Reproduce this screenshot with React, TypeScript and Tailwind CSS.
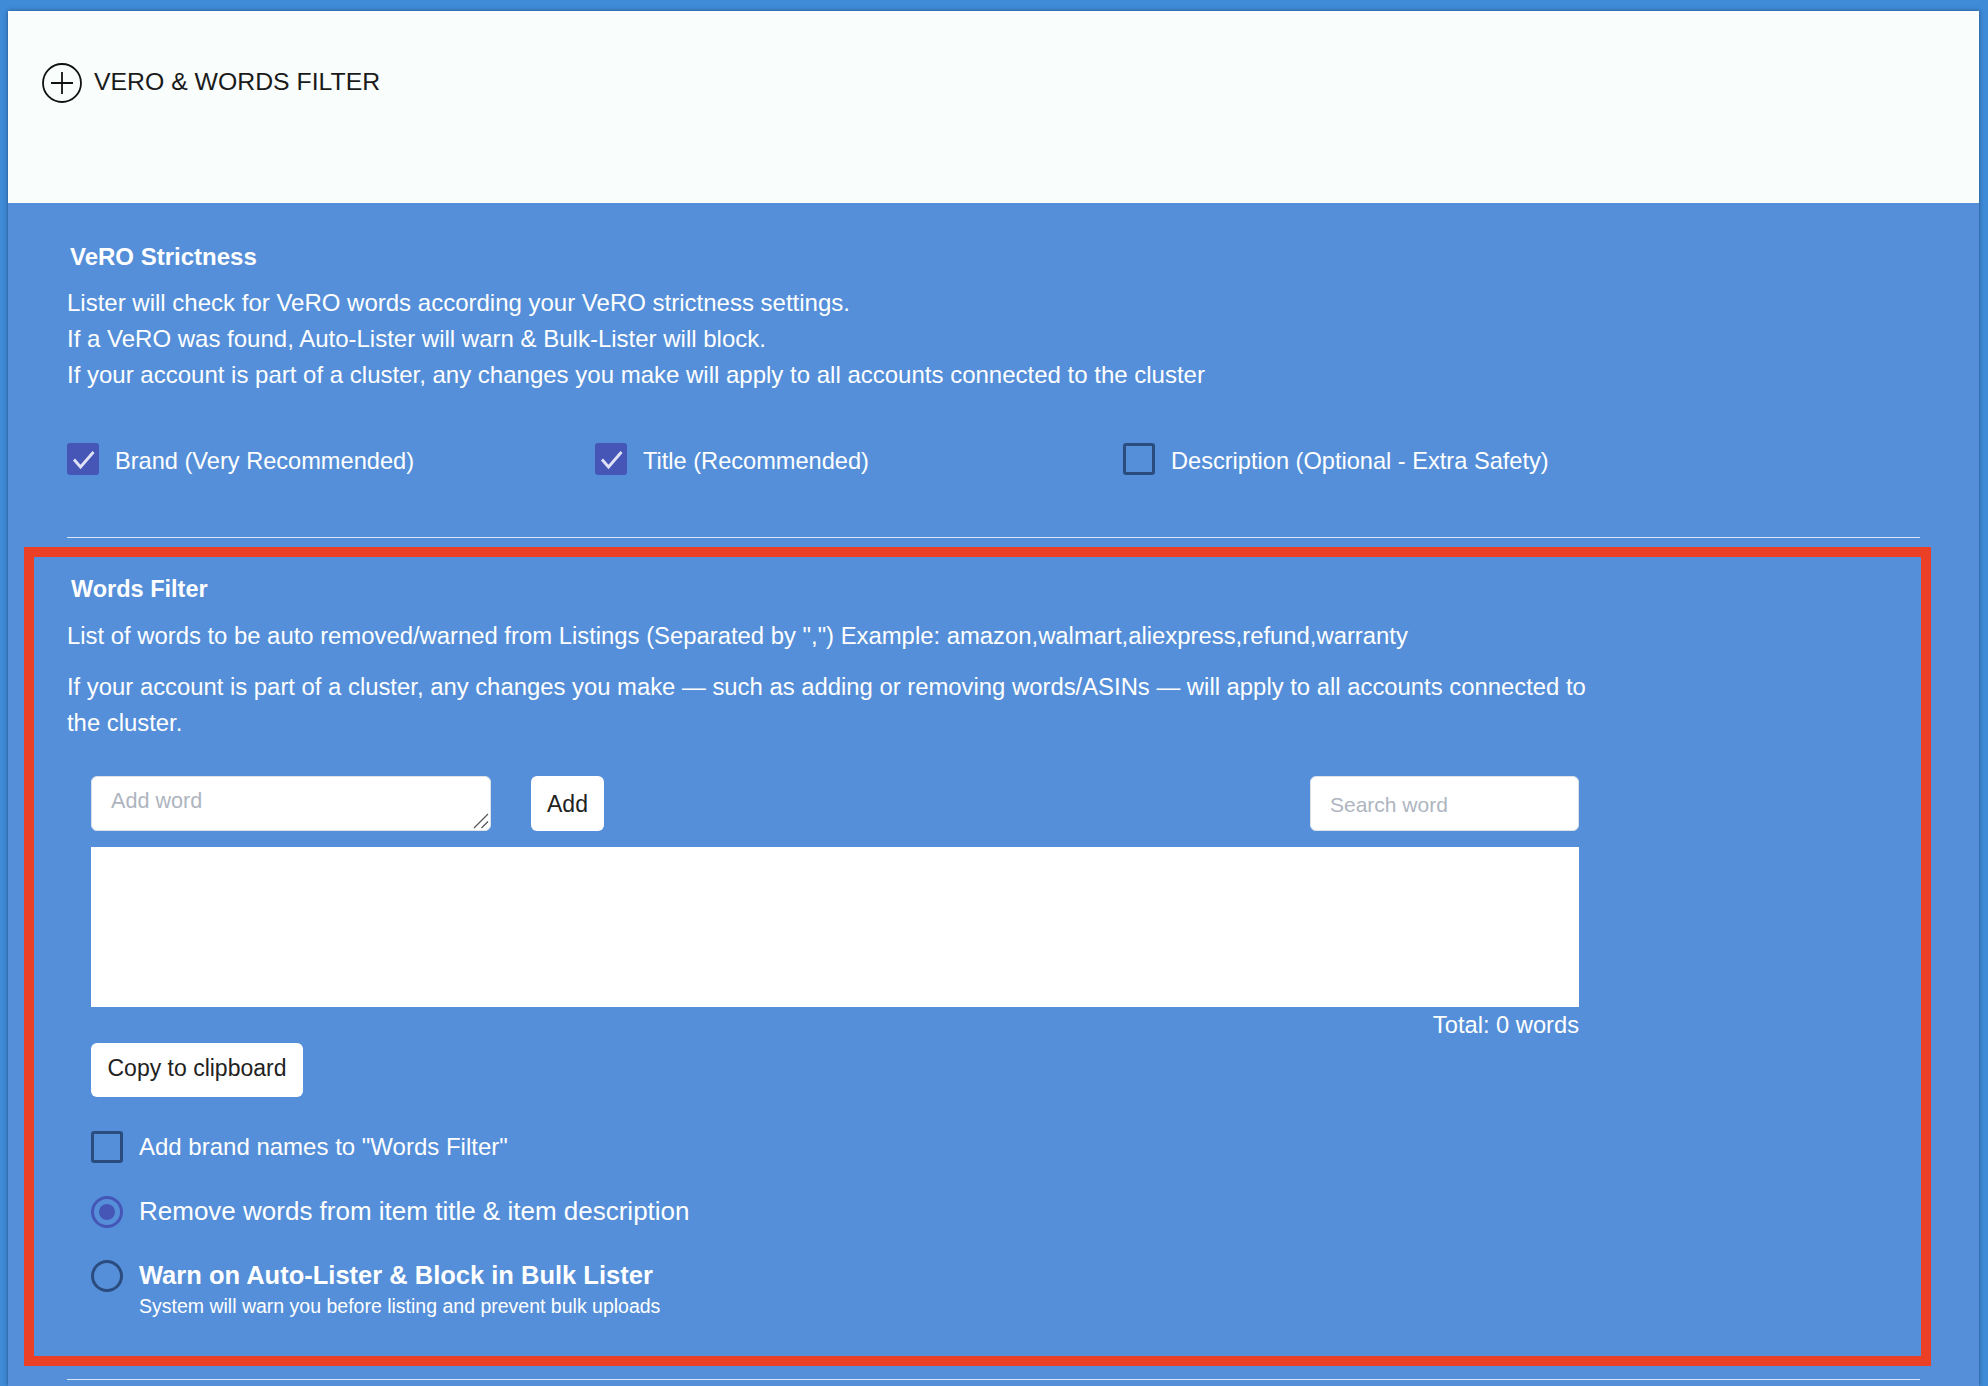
const Box = ({ checked }: { checked?: boolean }) =>
  checked ? (
    <span className="block h-8 w-8 shrink-0 rounded-[3px] bg-[#4556b7]">
      <svg viewBox="0 0 32 32" className="h-8 w-8" fill="none" stroke="#dfe3f5" strokeWidth="2.8">
        <path d="M7 16.5l6.5 7.5L26.5 9" />
      </svg>
    </span>
  ) : (
    <span className="block h-8 w-8 shrink-0 rounded-[3px] border-[3px] border-[#2b4c7e]" />
  );

const Option = ({ label, checked, className }: { label: string; checked?: boolean; className: string }) => (
  <label className={`flex items-center gap-4 ${className}`}>
    <Box checked={checked} />
    <span className="pt-[3px] text-[23.6px] leading-[28px] text-white">{label}</span>
  </label>
);

export default function App() {
  return (
    <div className="h-[1386px] overflow-hidden bg-[#3f8bd7] pt-[11px] pl-[8px] pr-[9px] font-['Liberation_Sans',Arial,sans-serif]">
      <div className="h-full bg-[#558fd9] shadow-[0_0_4px_rgba(20,50,90,0.7)]">
        <div className="flex h-[192px] items-start gap-3 bg-[#f9fdfc] pl-[34px] pt-[52px]">
          <svg viewBox="0 0 40 40" className="h-10 w-10 shrink-0 text-[#111]" fill="none" stroke="currentColor" strokeWidth="1.8">
            <circle cx="20" cy="20" r="19" />
            <path d="M20 9v22M9 20h22" />
          </svg>
          <span className="text-[24.8px] leading-[37px] text-[#1a1a1a]">VERO &amp; WORDS FILTER</span>
        </div>

        <div className="pl-[59px] pr-[59px] pt-[41px] text-[24px] text-white">
          <h3 className="pl-[3px] text-[24px] font-bold leading-[26px]">VeRO Strictness</h3>
          <div className="mt-[15px] leading-[36px]">
            <p>Lister will check for VeRO words according your VeRO strictness settings.</p>
            <p>If a VeRO was found, Auto-Lister will warn &amp; Bulk-Lister will block.</p>
            <p>If your account is part of a cluster, any changes you make will apply to all accounts connected to the cluster</p>
          </div>
          <div className="mt-[50px] flex">
            <Option checked label="Brand (Very Recommended)" className="w-[528px]" />
            <Option checked label="Title (Recommended)" className="w-[528px]" />
            <Option label="Description (Optional - Extra Safety)" className="" />
          </div>
          <div className="mt-[62px] h-px bg-[#dbe7f6]" />
        </div>

        <div className="ml-[16px] mt-[9px] h-[819px] w-[1907px] border-[10px] border-[#eb3f26] pl-[33px] pt-[18px] text-white">
          <h3 className="pl-[4px] text-[23.5px] font-bold leading-[28px]">Words Filter</h3>
          <p className="mt-[15px] text-[23.85px] leading-[36px]">
            List of words to be auto removed/warned from Listings (Separated by ",") Example: amazon,walmart,aliexpress,refund,warranty
          </p>
          <p className="mt-[15px] w-[1540px] text-[23.85px] leading-[36px]">
            If your account is part of a cluster, any changes you make — such as adding or removing words/ASINs — will apply to all accounts connected to the cluster.
          </p>

          <div className="ml-[24px] mt-[35px] w-[1488px]">
            <div className="flex items-start">
              <div className="relative h-[55px] w-[400px]">
                <textarea
                  placeholder="Add word"
                  className="block h-full w-full resize-none rounded-[6px] border border-[#dde2e8] bg-white px-[19px] pt-[11px] text-[21.6px] leading-[26px] text-[#222] outline-none placeholder:text-[#aeb5c0]"
                />
                <svg viewBox="0 0 16 16" className="absolute bottom-[2px] right-[2px] h-4 w-4" fill="none" stroke="#555" strokeWidth="1.2">
                  <path d="M1 15L15 1M8.5 15L15 8.5" />
                </svg>
              </div>
              <button className="ml-[40px] h-[55px] w-[73px] rounded-[6px] bg-white pt-[1px] text-[23px] text-[#222]">Add</button>
              <input
                placeholder="Search word"
                className="ml-auto h-[55px] w-[269px] rounded-[6px] border border-[#dde2e8] bg-white px-[19px] pt-[2px] text-[21px] text-[#222] outline-none placeholder:text-[#aeb5c0]"
              />
            </div>
            <div className="mt-[16px] h-[160px] bg-white" />
            <p className="mt-[5px] text-right text-[23.7px] leading-[26px]">Total: 0 words</p>
            <button className="mt-[5px] block h-[54px] w-[212px] rounded-[6px] bg-white pb-1 text-[23px] text-[#222]">Copy to clipboard</button>

            <div className="mt-[32px] flex items-center gap-4">
              <Box />
              <span className="text-[24px]">Add brand names to "Words Filter"</span>
            </div>
            <div className="mt-[27px] flex items-center gap-4">
              <span className="flex h-8 w-8 shrink-0 items-center justify-center rounded-full border-[3px] border-[#4556b7]">
                <span className="h-4 w-4 rounded-full bg-[#4556b7]" />
              </span>
              <span className="text-[26px]">Remove words from item title &amp; item description</span>
            </div>
            <div className="mt-[29px] flex items-start gap-4">
              <span className="block h-8 w-8 shrink-0 rounded-full border-[3px] border-[#2b4c7e]" />
              <div>
                <p className="text-[25.5px] font-bold leading-[30px]">Warn on Auto-Lister &amp; Block in Bulk Lister</p>
                <p className="mt-[4px] text-[19.5px] leading-[24px]">System will warn you before listing and prevent bulk uploads</p>
              </div>
            </div>
          </div>
        </div>

        <div className="ml-[59px] mr-[59px] mt-[13px] h-px bg-[#dbe7f6]" />
      </div>
    </div>
  );
}
